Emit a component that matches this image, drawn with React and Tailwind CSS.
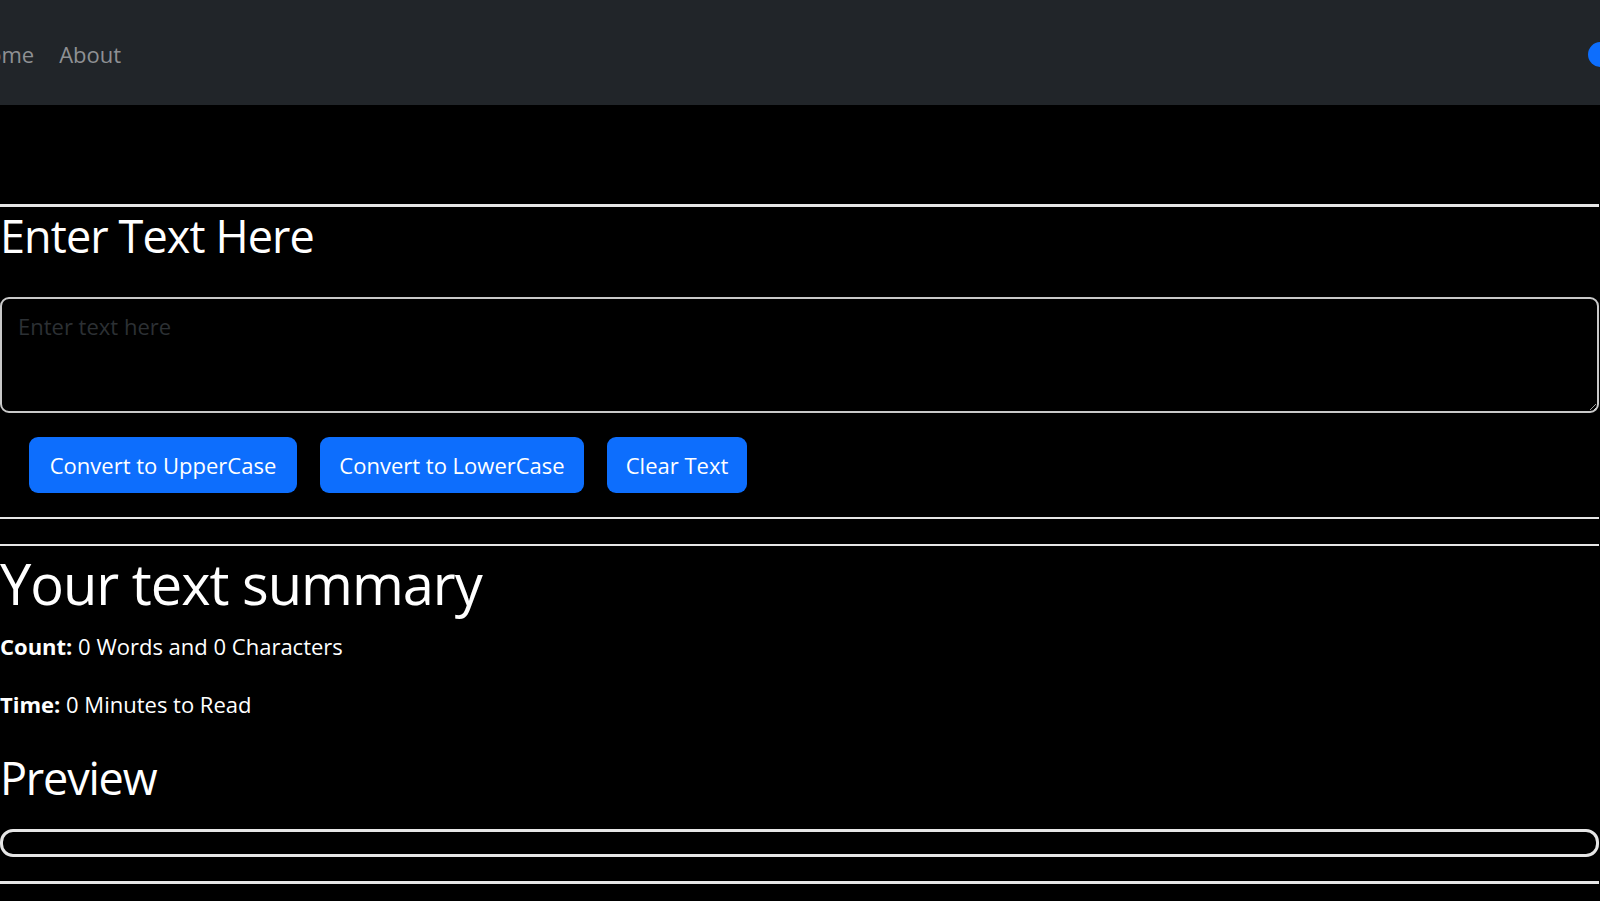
import React, { useState } from "react";

const font = { fontFamily: '"Open Sans", "Noto Sans", "Liberation Sans", sans-serif' };

function Navbar() {
  return (
    <nav className="flex h-[105px] items-center justify-between overflow-hidden bg-[#212529] pt-1">
      <ul className="ml-[-28px] flex gap-[25px] text-[22px] text-[#8f9194]">
        <li>Home</li>
        <li>About</li>
      </ul>
      <div className="mr-[-13px] h-[25px] w-[25px] rounded-full bg-[#0d6efd]" />
    </nav>
  );
}

function App() {
  const [text, setText] = useState("");

  const words = text.split(/\s+/).filter((w) => w.length > 0).length;
  const minutes = 0.008 * words;

  return (
    <div className="min-h-screen overflow-hidden bg-black text-white" style={font}>
      <Navbar />

      <div className="pt-[99px] pr-[1px]">
        <hr className="h-[3px] border-0 bg-[#e6e6e6]" />

        <h2 className="mt-[2px] text-[45px] leading-[54px] tracking-[-0.9px]">Enter Text Here</h2>
        <textarea
          className="mt-[34px] block h-[116px] w-full rounded-[9px] border-2 border-[#c9c9c9] bg-black pt-[11px] pl-[16px] text-[22px] leading-[33px] text-white outline-none placeholder:text-[#2c3034]"
          placeholder="Enter text here"
          value={text}
          onChange={(e) => setText(e.target.value)}
        />

        <div className="mt-[24px] ml-[29px] flex gap-[23px] text-[22px]">
          <button
            onClick={() => setText(text.toUpperCase())}
            className="h-[56px] w-[268px] rounded-[9px] bg-[#0d6efd] text-white"
          >
            Convert to UpperCase
          </button>
          <button
            onClick={() => setText(text.toLowerCase())}
            className="h-[56px] w-[264px] rounded-[9px] bg-[#0d6efd] text-white"
          >
            Convert to LowerCase
          </button>
          <button
            onClick={() => setText("")}
            className="h-[56px] w-[140px] rounded-[9px] bg-[#0d6efd] text-white"
          >
            Clear Text
          </button>
        </div>

        <hr className="mt-[24px] h-[2px] border-0 bg-[#e6e6e6]" />
        <hr className="mt-[25px] h-[2px] border-0 bg-[#e6e6e6]" />

        <h1 className="mt-[4px] text-[56px] leading-[67px] tracking-[-1px]">Your text summary</h1>
        <p className="mt-[13px] text-[22px] leading-[33px]">
          <b>Count:</b> {words} Words and {text.length} Characters
        </p>
        <p className="mt-[25px] text-[22px] leading-[33px]">
          <b>Time:</b> {minutes} Minutes to Read
        </p>

        <h2 className="mt-[29px] text-[45px] leading-[55px] tracking-[-1.2px]">Preview</h2>
        <div className="mt-[24px] h-[28px] rounded-[13px] border-[3px] border-[#e6e6e6]">{text}</div>

        <hr className="mt-[24px] h-[3px] border-0 bg-[#e6e6e6]" />
      </div>
    </div>
  );
}

export default App;
